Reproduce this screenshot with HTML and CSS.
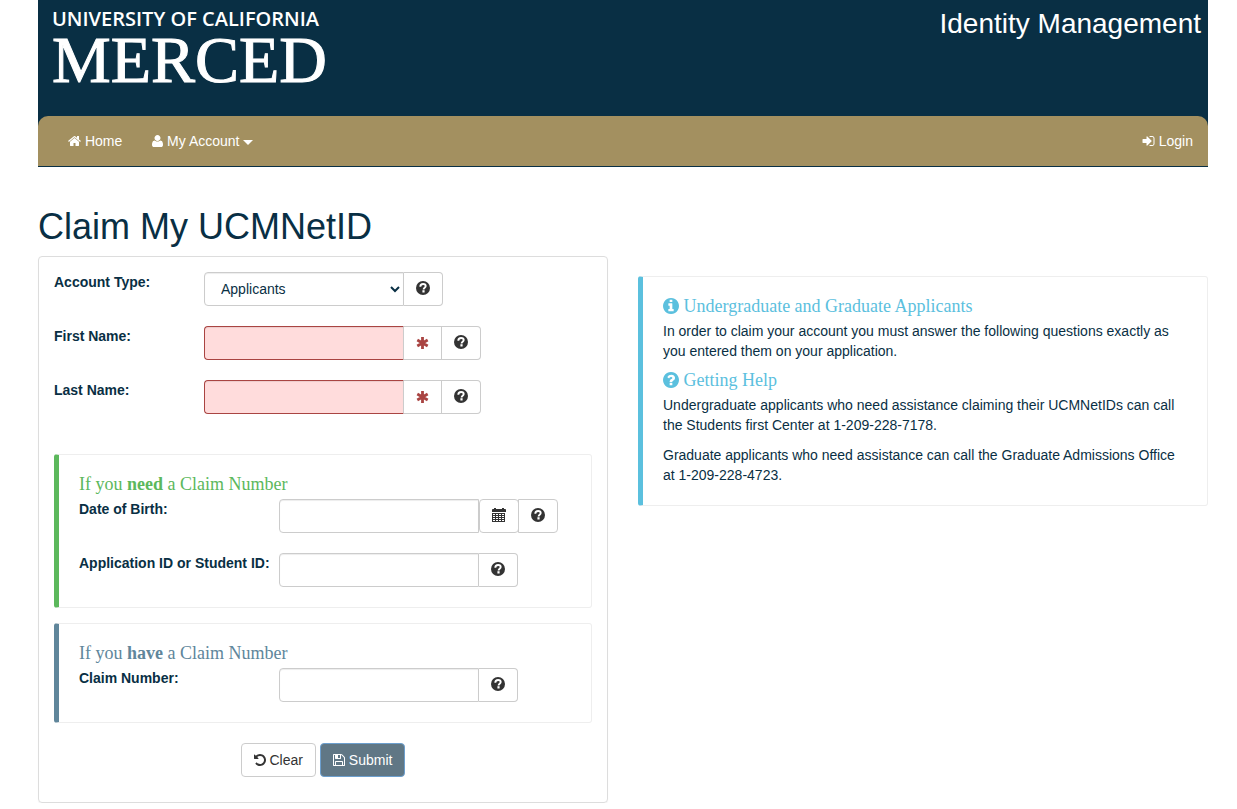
FILE: index.html
```html
<!DOCTYPE html>
<html lang="en">
<head>
  <meta charset="UTF-8">
  <meta name="viewport" content="width=device-width, initial-scale=1">
  <title>Claim My UCMNetID</title>
  <link rel="stylesheet" href="styles.css">
</head>
<body>

  <!-- shared icons -->
  <svg class="sprite" aria-hidden="true">
    <symbol id="help" viewBox="0 0 14 14">
      <circle cx="7" cy="7" r="7" fill="currentColor"/>
      <path d="M4.300 5.700C4.300 3.900 5.500 3 7.100 3c1.600 0 2.600.9 2.600 2.100 0 1.700-2.100 1.700-2.100 3.300" fill="none" stroke="#fff" stroke-width="1.900"/>
      <path d="M6.400 9.200h2.200v2.300H6.400z" fill="#fff"/>
    </symbol>
    <symbol id="asterisk" viewBox="0 0 14 14">
      <path d="M6.500 1v12M1.300 4l10.400 6M11.700 4L1.300 10" fill="none" stroke="currentColor" stroke-width="2.800"/>
    </symbol>
    <symbol id="calendar" viewBox="0 0 14 14">
      <path d="M0 4V2c0-.5.4-1 1-1h1V0h2v1h6V0h2v1h1c.6 0 1 .5 1 1v2z" fill="currentColor"/>
      <path d="M0 5h13v9H0z" fill="currentColor"/>
      <path d="M1 6.500h11M1 8.500h11M1 10.500h11M1 12.500h11" fill="none" stroke="#fff" stroke-width="1" stroke-dasharray="2 1"/>
    </symbol>
  </svg>

  <div class="container">
    <header class="site-header">
      <a class="logo" href="#">
        <span class="logo-top">UNIVERSITY OF CALIFORNIA</span>
        <span class="logo-main">MERCED</span>
      </a>
      <div class="app-name">Identity Management</div>
    </header>

    <div class="nav-wrap">
      <nav class="navbar">
        <a href="#"><svg class="icon" viewBox="64 0 1664 1792"><path d="M1472 992v480q0 26-19 45t-45 19h-384v-384h-256v384h-384q-26 0-45-19t-19-45v-480q0-1 .5-3t.5-3l575-474 575 474q1 2 1 6zm223-69l-62 74q-8 9-21 11h-3q-13 0-21-7l-692-577-692 577q-12 8-24 7-13-2-21-11l-62-74q-8-10-7-23.5t11-21.5l719-599q32-26 76-26t76 26l244 204v-195q0-14 9-23t23-9h192q14 0 23 9t9 23v408l219 182q10 8 11 21.5t-7 23.5z"/></svg> Home</a>
        <a href="#"><svg class="icon icon-user" viewBox="192 0 1408 1792"><path d="M1600 1405q0 120-73 189.500t-194 69.500h-874q-121 0-194-69.500t-73-189.500q0-53 3.500-103.500t14-109 26.500-108.500 43-97.500 62-81 85.500-53.500 111.500-20q9 0 42 21.500t74.500 48 108 48 133.500 21.500 133.500-21.500 108-48 74.500-48 42-21.500q61 0 111.500 20t85.500 53.500 62 81 43 97.500 26.500 108.500 14 109 3.500 103.500zm-320-893q0 159-112.500 271.500t-271.500 112.500-271.500-112.500-112.500-271.500 112.500-271.500 271.500-112.500 271.500 112.500 112.500 271.500z"/></svg> My Account <span class="caret"></span></a>
        <a class="nav-right" href="#"><svg class="icon" viewBox="64 0 1664 1792"><path d="M1312 896q0 26-19 45l-544 544q-19 19-45 19t-45-19-19-45v-288h-448q-26 0-45-19t-19-45v-384q0-26 19-45t45-19h448v-288q0-26 19-45t45-19 45 19l544 544q19 19 19 45zm352-352v704q0 119-84.500 203.500t-203.500 84.500h-320q-13 0-22.500-9.500t-9.500-22.500q0-4-1-20t-.5-26.500 3-23.500 10-19.500 20.500-6.500h320q66 0 113-47t47-113v-704q0-66-47-113t-113-47h-312l-11.500-1-11.500-3-8-5.500-7-9-2-13.500q0-4-1-20t-.5-26.500 3-23.500 10-19.500 20.500-6.500h320q119 0 203.500 84.500t84.500 203.500z"/></svg> Login</a>
      </nav>
    </div>

    <h1>Claim My UCMNetID</h1>

    <main class="columns">
      <form class="panel">
        <div class="form-row">
          <label for="accountType">Account Type:</label>
          <div class="input-group">
            <select class="form-control" id="accountType">
              <option>Applicants</option>
            </select>
            <button type="button" class="addon last" aria-label="Help"><svg class="glyph"><use href="#help"/></svg></button>
          </div>
        </div>
        <div class="form-row">
          <label for="firstName">First Name:</label>
          <div class="input-group">
            <input class="form-control required" type="text" id="firstName">
            <span class="addon star"><svg class="glyph"><use href="#asterisk"/></svg></span>
            <button type="button" class="addon last" aria-label="Help"><svg class="glyph"><use href="#help"/></svg></button>
          </div>
        </div>
        <div class="form-row">
          <label for="lastName">Last Name:</label>
          <div class="input-group">
            <input class="form-control required" type="text" id="lastName">
            <span class="addon star"><svg class="glyph"><use href="#asterisk"/></svg></span>
            <button type="button" class="addon last" aria-label="Help"><svg class="glyph"><use href="#help"/></svg></button>
          </div>
        </div>

        <div class="callouts">
          <section class="callout callout-success">
            <h4>If you <strong>need</strong> a Claim Number</h4>
            <div class="form-row">
              <label for="birthDate">Date of Birth:</label>
              <div class="input-group">
                <input class="form-control" type="text" id="birthDate">
                <button type="button" class="addon calendar" aria-label="Choose date"><svg class="glyph"><use href="#calendar"/></svg></button>
                <button type="button" class="addon last" aria-label="Help"><svg class="glyph"><use href="#help"/></svg></button>
              </div>
            </div>
            <div class="form-row">
              <label for="studentId">Application ID or Student ID:</label>
              <div class="input-group">
                <input class="form-control" type="text" id="studentId">
                <button type="button" class="addon last" aria-label="Help"><svg class="glyph"><use href="#help"/></svg></button>
              </div>
            </div>
          </section>

          <section class="callout callout-primary">
            <h4>If you <strong>have</strong> a Claim Number</h4>
            <div class="form-row">
              <label for="claimNumber">Claim Number:</label>
              <div class="input-group">
                <input class="form-control" type="text" id="claimNumber">
                <button type="button" class="addon last" aria-label="Help"><svg class="glyph"><use href="#help"/></svg></button>
              </div>
            </div>
          </section>
        </div>

        <div class="actions">
          <button type="reset" class="btn"><svg class="icon icon-btn" viewBox="128 0 1536 1792"><path d="M1664 896q0 156-61 298t-164 245-245 164-298 61q-172 0-327-72.500t-264-204.500q-7-10-6.500-22.500t8.500-20.500l137-138q10-9 25-9 16 2 23 12 73 95 179 147t225 52q104 0 198.500-40.500t163.500-109.500 109.500-163.500 40.500-198.500-40.500-198.500-109.500-163.500-163.500-109.500-198.500-40.500q-98 0-188 35.500t-160 101.500l137 138q31 30 14 69-17 40-59 40h-448q-26 0-45-19t-19-45v-448q0-42 40-59 39-17 69 14l130 129q107-101 244.500-156.500t284.500-55.500q156 0 298 61t245 164 164 245 61 298z"/></svg> Clear</button>
          <button type="submit" class="btn btn-primary"><svg class="icon icon-btn" viewBox="128 0 1536 1792"><path d="M512 1536h768v-384h-768v384zm896 0h128v-896q0-14-10-38.500t-20-34.500l-281-281q-10-10-34-20t-39-10v416q0 40-28 68t-68 28h-576q-40 0-68-28t-28-68v-416h-128v1280h128v-416q0-40 28-68t68-28h832q40 0 68 28t28 68v416zm-384-928v-320q0-13-9.500-22.500t-22.500-9.500h-192q-13 0-22.500 9.500t-9.500 22.500v320q0 13 9.500 22.500t22.500 9.500h192q13 0 22.500-9.500t9.500-22.500zm640 32v928q0 40-28 68t-68 28h-1344q-40 0-68-28t-28-68v-1344q0-40 28-68t68-28h928q40 0 88 20t76 48l280 280q28 28 48 76t20 88z"/></svg> Submit</button>
        </div>
      </form>

      <aside class="callout callout-info">
        <h4><svg class="icon icon-head" viewBox="128 128 1536 1536"><path d="M1152 1376v-160q0-14-9-23t-23-9h-96v-512q0-14-9-23t-23-9h-320q-14 0-23 9t-9 23v160q0 14 9 23t23 9h96v320h-96q-14 0-23 9t-9 23v160q0 14 9 23t23 9h448q14 0 23-9t9-23zm-128-896v-160q0-14-9-23t-23-9h-192q-14 0-23 9t-9 23v160q0 14 9 23t23 9h192q14 0 23-9t9-23zm640 416q0 209-103 385.500t-279.500 279.500-385.500 103-385.500-103-279.500-279.500-103-385.500 103-385.500 279.500-279.500 385.500-103 385.500 103 279.500 279.500 103 385.500z"/></svg> Undergraduate and Graduate Applicants</h4>
        <p>In order to claim your account you must answer the following questions exactly as you entered them on your application.</p>
        <h4><svg class="icon icon-head" viewBox="128 128 1536 1536"><path d="M1024 1376v-192q0-14-9-23t-23-9h-192q-14 0-23 9t-9 23v192q0 14 9 23t23 9h192q14 0 23-9t9-23zm256-672q0-88-55.500-163t-138.500-116-170-41q-243 0-371 213-15 24 8 42l132 100q7 6 19 6 16 0 25-12 53-68 86-92 34-24 86-24 48 0 85.500 26t37.500 59q0 38-20 61t-68 45q-63 28-115.500 86.500t-52.500 125.500v36q0 14 9 23t23 9h192q14 0 23-9t9-23q0-19 21.500-49.500t54.500-49.500q32-18 49-28.500t46-35 44.500-48 28-60.500 12.500-81zm384 192q0 209-103 385.500t-279.500 279.500-385.500 103-385.500-103-279.500-279.500-103-385.500 103-385.500 279.500-279.500 385.500-103 385.500 103 279.500 279.500 103 385.500z"/></svg> Getting Help</h4>
        <p>Undergraduate applicants who need assistance claiming their UCMNetIDs can call the Students first Center at 1-209-228-7178.</p>
        <p>Graduate applicants who need assistance can call the Graduate Admissions Office at 1-209-228-4723.</p>
      </aside>
    </main>
  </div>

</body>
</html>
```

FILE: styles.css
```css
:root {
  --navy: #092f44;
  --gold: #a39060;
  --border: #ccc;
}

* {
  box-sizing: border-box;
}

body {
  margin: 0;
  font-family: "Liberation Sans", Arial, sans-serif;
  font-size: 14px;
  line-height: 20px;
  color: var(--navy);
  background: #fff;
}

.sprite {
  display: none;
}

.container {
  max-width: 1237px;
  margin: 0 auto;
  padding: 0 29px 0 38px;
}

/* Header */
.site-header {
  display: flex;
  justify-content: space-between;
  min-height: 116px;
  padding: 8px 7px 0 14px;
  background: var(--navy);
  color: #fff;
}

.logo {
  display: flex;
  flex-direction: column;
  color: #fff;
  text-decoration: none;
}

.logo-top {
  font-family: "Open Sans", "Noto Sans", sans-serif;
  font-size: 20px;
  font-weight: 600;
  line-height: 22px;
}

.logo-main {
  font-family: "Liberation Serif", "Times New Roman", serif;
  font-size: 66px;
  line-height: 60px;
  -webkit-text-stroke: 1px #fff;
}

.app-name {
  font-size: 28px;
  line-height: 32px;
}

/* Navbar */
.nav-wrap {
  background: var(--navy);
}

.navbar {
  display: flex;
  padding: 0 15px;
  background: var(--gold);
  border-bottom: 1px solid var(--navy);
  border-radius: 10px 10px 0 0;
}

.navbar a {
  padding: 15px;
  color: #fff;
  text-decoration: none;
}

.navbar .nav-right {
  margin-left: auto;
  padding-right: 0;
}

.caret {
  display: inline-block;
  vertical-align: middle;
  border-top: 5px solid;
  border-left: 5px solid transparent;
  border-right: 5px solid transparent;
}

.icon {
  width: 13px;
  height: 14px;
  fill: currentColor;
  vertical-align: -2px;
}

.icon-user {
  width: 11px;
}

.icon-btn {
  width: 12px;
}

.icon-head {
  width: 16px;
  height: 16px;
}

/* Page */
h1 {
  margin: 40px 0 9px;
  font-size: 36px;
  font-weight: normal;
  line-height: 40px;
}

.columns {
  display: grid;
  grid-template-columns: 1fr 1fr;
  gap: 30px;
  align-items: start;
}

.panel {
  padding: 15px 15px 25px;
  border: 1px solid #ddd;
  border-radius: 4px;
  box-shadow: 0 1px 1px rgba(0,0,0,0.05);
}

/* Form */
.form-row {
  display: grid;
  grid-template-columns: 150px 1fr;
}

.form-row + .form-row {
  margin-top: 20px;
}

.callout .form-row {
  grid-template-columns: 200px 1fr;
}

label {
  font-weight: bold;
  white-space: nowrap;
}

.input-group {
  display: flex;
}

.form-control {
  width: 200px;
  height: 34px;
  padding: 6px 12px;
  font: inherit;
  color: var(--navy);
  background: #fff;
  border: 1px solid var(--border);
  border-radius: 4px 0 0 4px;
  box-shadow: inset 0 1px 1px rgba(0,0,0,0.075);
}

select.form-control {
  padding-right: 0;
}

.form-control.required {
  background: #ffdcdc;
  border-color: #a94442;
  border-right-color: var(--border);
}

.addon {
  display: flex;
  align-items: center;
  justify-content: center;
  width: 39px;
  height: 34px;
  padding: 0 0 2px;
  color: #333;
  background: #fff;
  border: 1px solid var(--border);
  border-left: 0;
}

.addon.last {
  border-radius: 0 4px 4px 0;
}

.addon.star {
  width: 38px;
  padding: 0;
  color: #a94442;
}

.addon.calendar {
  width: 40px;
  border-left: 1px solid var(--border);
  border-radius: 4px;
}

.addon.calendar + .last {
  width: 40px;
  margin-left: -1px;
  border-left: 1px solid var(--border);
}

.glyph {
  width: 14px;
  height: 14px;
}

/* Callouts */
.callouts {
  display: grid;
  gap: 15px;
  margin-top: 40px;
}

.callout {
  padding: 20px;
  border: 1px solid #eee;
  border-left-width: 5px;
  border-radius: 3px;
}

.callout h4 {
  margin: 0 0 5px;
  font-family: "Liberation Serif", "Times New Roman", serif;
  font-size: 18px;
  font-weight: normal;
  line-height: 19px;
}

.callout p {
  margin: 0 0 10px;
}

.callout p:last-child {
  margin-bottom: 0;
}

.callout-success {
  border-left-color: #5cb85c;
}

.callout-success h4 {
  color: #5cb85c;
}

.callout-primary {
  border-left-color: #60869b;
}

.callout-primary h4 {
  color: #60869b;
}

.callout-info {
  margin-top: 20px;
  border-left-color: #5bc0de;
}

.callout-info h4 {
  color: #5bc0de;
}

/* Buttons */
.actions {
  display: flex;
  justify-content: center;
  gap: 4px;
  margin-top: 20px;
}

.btn {
  height: 34px;
  padding: 6px 12px;
  font: inherit;
  color: #333;
  background: #fff;
  border: 1px solid var(--border);
  border-radius: 4px;
}

.btn-primary {
  color: #fff;
  background: #607785;
  border-color: #6c9fce;
}
```
